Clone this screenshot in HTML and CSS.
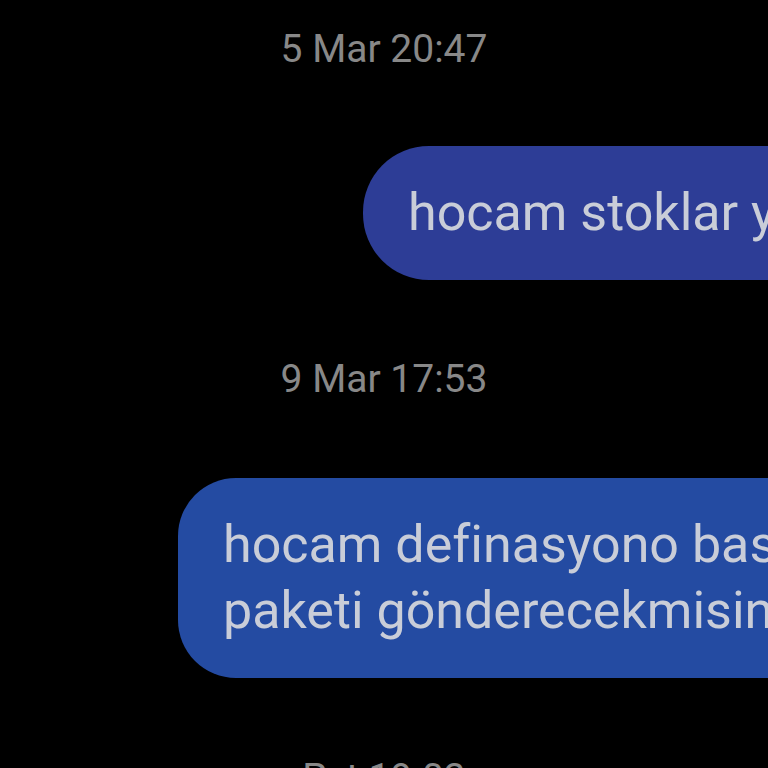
FILE: index.html
```html
<!DOCTYPE html>
<html lang="tr">
<head>
<meta charset="utf-8">
<title>Mesajlar</title>
<link rel="stylesheet" href="styles.css">
</head>
<body>
<main class="chat">
  <div class="stamp">5 Mar 20:47</div>
  <div class="bubble bubble-a"><span class="line">hocam stoklar yenilendi mi</span></div>
  <div class="stamp stamp-b">9 Mar 17:53</div>
  <div class="bubble bubble-b"><span class="line">hocam definasyono basladın mı</span><span class="line">paketi gönderecekmisin</span></div>
  <div class="stamp stamp-c">Pzt 19:03</div>
</main>
</body>
</html>
```
FILE: styles.css
```css
html, body {
  margin: 0;
  padding: 0;
  background: #000;
  width: 768px;
  height: 768px;
  overflow: hidden;
}
.chat {
  display: flex;
  flex-direction: column;
  gap: 72px;
  padding-top: 24px;
  font-family: Roboto, "Noto Sans", sans-serif;
}
.stamp {
  text-align: center;
  color: #888888;
  font-size: 39px;
  line-height: 50px;
  height: 50px;
}
.stamp-b {
  margin-top: 2px;
}
.stamp-c {
  margin-top: 3px;
}
.bubble {
  align-self: flex-start;
  display: flex;
  flex-direction: column;
  white-space: nowrap;
  padding: 34px 120px 34px 45px;
  font-size: 52px;
  line-height: 66px;
  color: #c9cdd8;
  border-radius: 66px 0 0 66px;
}
.bubble-a {
  margin-left: 363px;
  background: #2d3d96;
}
.bubble-b {
  margin-left: 178px;
  margin-top: 2px;
  background: #244ba2;
  border-radius: 58px 0 0 58px;
}
```
